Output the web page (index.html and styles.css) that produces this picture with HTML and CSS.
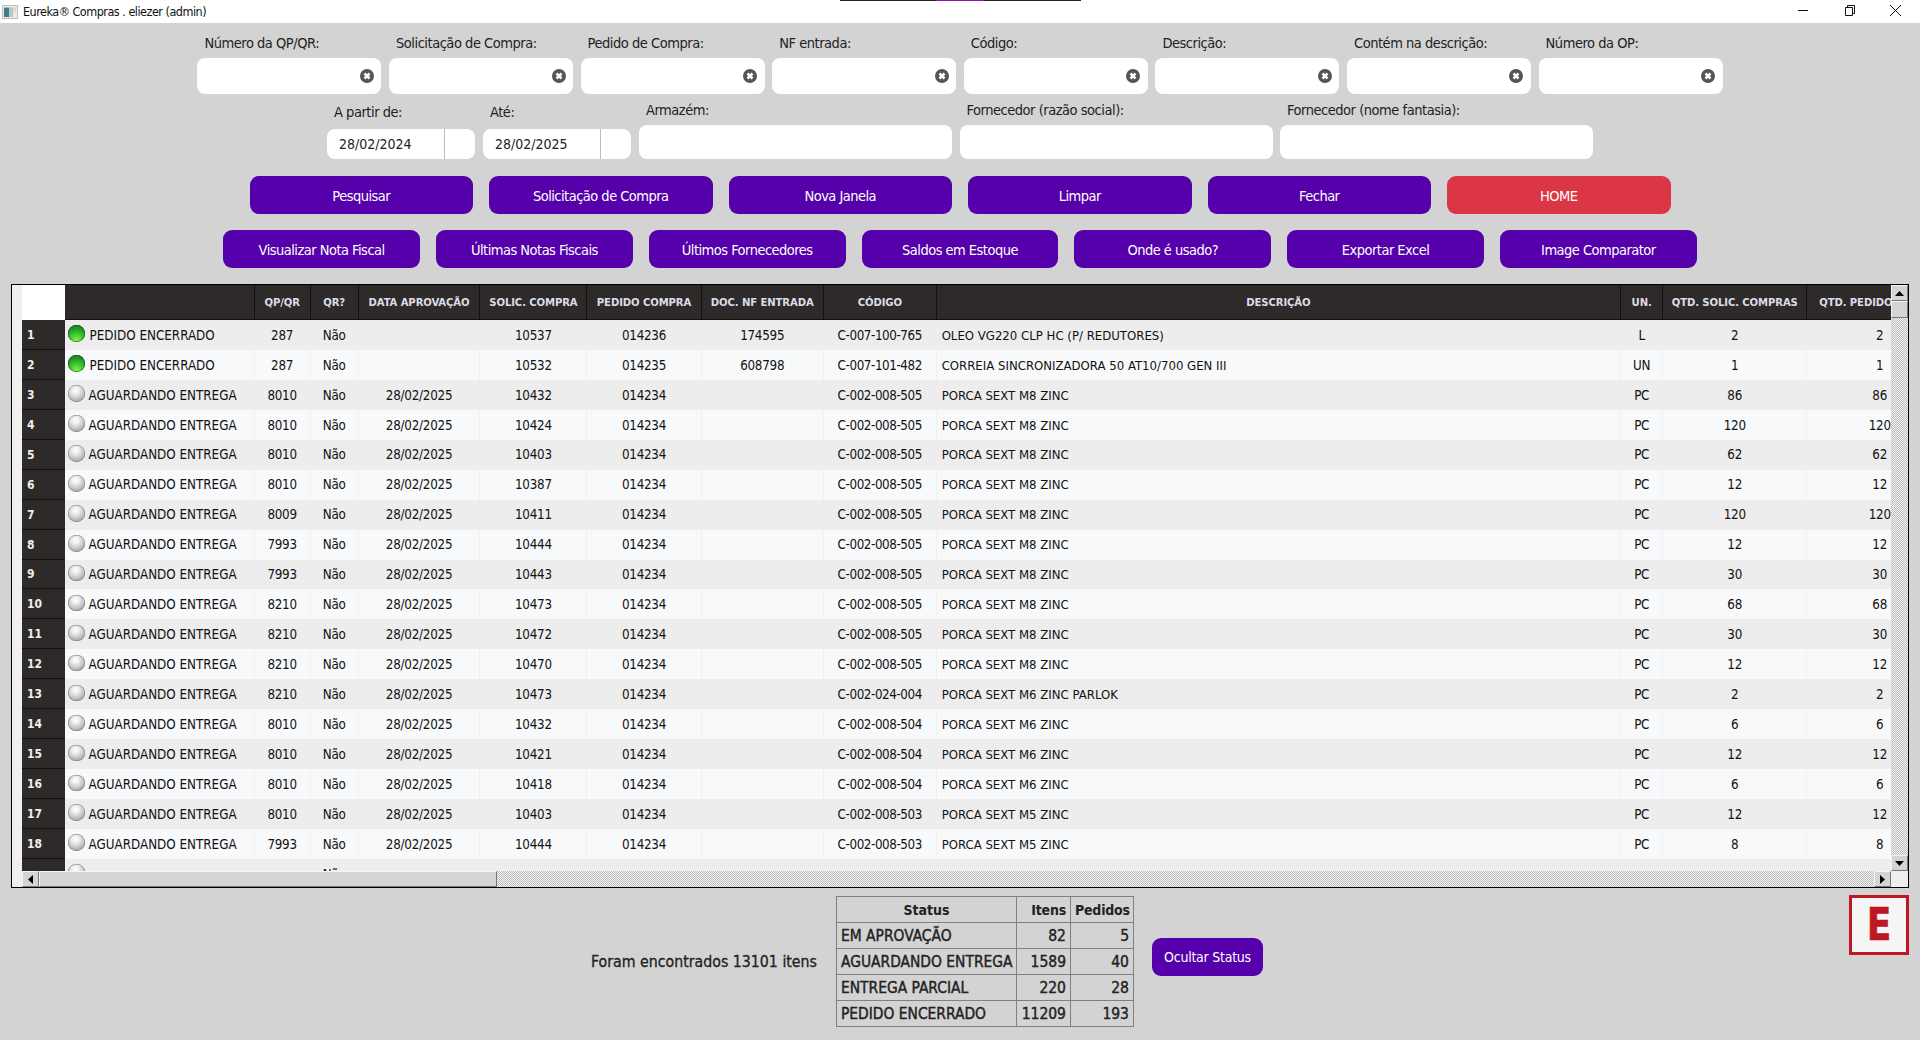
FILE: index.html
```html
<!DOCTYPE html>
<html lang="pt-BR">
<head>
<meta charset="utf-8">
<title>Eureka® Compras</title>
<link rel="stylesheet" href="styles.css">
</head>
<body>
<div class="topstrip"><span class="strip-a"></span><span class="strip-b"></span><span class="strip-a2"></span></div>
<header class="titlebar">
  <svg class="appicon" viewBox="0 0 16 16" aria-hidden="true"><rect x=".5" y="1.500" width="15" height="13" fill="#ececec" stroke="#bdbdbd"/><rect x="2" y="3.500" width="5" height="9.500" fill="#3d8088"/><rect x="7" y="3.500" width="4" height="9.500" fill="#b7c6cc"/><rect x="11" y="3.500" width="3" height="5" fill="#e4dcb4"/></svg>
  <span class="wintitle">Eureka® Compras . eliezer (admin)</span>
  <div class="winctrls">
    <svg viewBox="0 0 46 23" aria-hidden="true"><path d="M18 10.500h10" stroke="#111" fill="none"/></svg>
    <svg viewBox="0 0 46 23" aria-hidden="true"><path d="M19.500 7.500h7v8h-7zM21.500 7.500v-2h7v8h-2" stroke="#111" fill="none"/></svg>
    <svg viewBox="0 0 46 23" aria-hidden="true"><path d="M18 5l11 11M29 5L18 16" stroke="#111" fill="none"/></svg>
  </div>
</header>
<main class="app">
  <section class="row filters">
    <label class="field"><span>Número da QP/QR:</span><div class="input clearable"><i class="clear"><svg viewBox="0 0 14 14"><path d="M4.500 4.500l5 5M9.500 4.500l-5 5"/></svg></i></div></label>
    <label class="field"><span>Solicitação de Compra:</span><div class="input clearable"><i class="clear"><svg viewBox="0 0 14 14"><path d="M4.500 4.500l5 5M9.500 4.500l-5 5"/></svg></i></div></label>
    <label class="field"><span>Pedido de Compra:</span><div class="input clearable"><i class="clear"><svg viewBox="0 0 14 14"><path d="M4.500 4.500l5 5M9.500 4.500l-5 5"/></svg></i></div></label>
    <label class="field"><span>NF entrada:</span><div class="input clearable"><i class="clear"><svg viewBox="0 0 14 14"><path d="M4.500 4.500l5 5M9.500 4.500l-5 5"/></svg></i></div></label>
    <label class="field"><span>Código:</span><div class="input clearable"><i class="clear"><svg viewBox="0 0 14 14"><path d="M4.500 4.500l5 5M9.500 4.500l-5 5"/></svg></i></div></label>
    <label class="field"><span>Descrição:</span><div class="input clearable"><i class="clear"><svg viewBox="0 0 14 14"><path d="M4.500 4.500l5 5M9.500 4.500l-5 5"/></svg></i></div></label>
    <label class="field"><span>Contém na descrição:</span><div class="input clearable"><i class="clear"><svg viewBox="0 0 14 14"><path d="M4.500 4.500l5 5M9.500 4.500l-5 5"/></svg></i></div></label>
    <label class="field"><span>Número da OP:</span><div class="input clearable"><i class="clear"><svg viewBox="0 0 14 14"><path d="M4.500 4.500l5 5M9.500 4.500l-5 5"/></svg></i></div></label>
  </section>
  <section class="row filters2">
    <label class="field date"><span>A partir de:</span><div class="input dateinput"><b>28/02/2024</b><em></em></div></label>
    <label class="field date"><span>Até:</span><div class="input dateinput"><b>28/02/2025</b><em></em></div></label>
    <label class="field wide"><span>Armazém:</span><div class="input"></div></label>
    <label class="field wide"><span>Fornecedor (razão social):</span><div class="input"></div></label>
    <label class="field wide"><span>Fornecedor (nome fantasia):</span><div class="input"></div></label>
  </section>
  <section class="row buttons1">
    <button>Pesquisar</button><button>Solicitação de Compra</button><button>Nova Janela</button><button>Limpar</button><button>Fechar</button><button class="danger">HOME</button>
  </section>
  <section class="row buttons2">
    <button>Visualizar Nota Fiscal</button><button>Últimas Notas Fiscais</button><button>Últimos Fornecedores</button><button>Saldos em Estoque</button><button>Onde é usado?</button><button>Exportar Excel</button><button>Image Comparator</button>
  </section>
  <section class="grid-frame">
    <div class="grid-top">
      <div class="gutter"></div>
      <div class="viewport">
        <div class="tr th"><div class="corner"></div><div></div><div>QP/QR</div><div>QR?</div><div>DATA APROVAÇÃO</div><div>SOLIC. COMPRA</div><div>PEDIDO COMPRA</div><div>DOC. NF ENTRADA</div><div>CÓDIGO</div><div>DESCRIÇÃO</div><div>UN.</div><div>QTD. SOLIC. COMPRAS</div><div class="lastth">QTD. PEDIDO</div></div>
        <div class="tr"><div class="rh">1</div><div class="st ok"><i class="led green"></i>PEDIDO ENCERRADO</div><div>287</div><div>Não</div><div></div><div>10537</div><div>014236</div><div>174595</div><div class="cd">C-007-100-765</div><div class="ds">OLEO VG220 CLP HC (P/ REDUTORES)</div><div>L</div><div>2</div><div>2</div></div>
        <div class="tr"><div class="rh">2</div><div class="st ok"><i class="led green"></i>PEDIDO ENCERRADO</div><div>287</div><div>Não</div><div></div><div>10532</div><div>014235</div><div>608798</div><div class="cd">C-007-101-482</div><div class="ds">CORREIA SINCRONIZADORA 50 AT10/700 GEN III</div><div>UN</div><div>1</div><div>1</div></div>
        <div class="tr"><div class="rh">3</div><div class="st"><i class="led"></i>AGUARDANDO ENTREGA</div><div>8010</div><div>Não</div><div>28/02/2025</div><div>10432</div><div>014234</div><div></div><div class="cd">C-002-008-505</div><div class="ds">PORCA SEXT M8 ZINC</div><div>PC</div><div>86</div><div>86</div></div>
        <div class="tr"><div class="rh">4</div><div class="st"><i class="led"></i>AGUARDANDO ENTREGA</div><div>8010</div><div>Não</div><div>28/02/2025</div><div>10424</div><div>014234</div><div></div><div class="cd">C-002-008-505</div><div class="ds">PORCA SEXT M8 ZINC</div><div>PC</div><div>120</div><div>120</div></div>
        <div class="tr"><div class="rh">5</div><div class="st"><i class="led"></i>AGUARDANDO ENTREGA</div><div>8010</div><div>Não</div><div>28/02/2025</div><div>10403</div><div>014234</div><div></div><div class="cd">C-002-008-505</div><div class="ds">PORCA SEXT M8 ZINC</div><div>PC</div><div>62</div><div>62</div></div>
        <div class="tr"><div class="rh">6</div><div class="st"><i class="led"></i>AGUARDANDO ENTREGA</div><div>8010</div><div>Não</div><div>28/02/2025</div><div>10387</div><div>014234</div><div></div><div class="cd">C-002-008-505</div><div class="ds">PORCA SEXT M8 ZINC</div><div>PC</div><div>12</div><div>12</div></div>
        <div class="tr"><div class="rh">7</div><div class="st"><i class="led"></i>AGUARDANDO ENTREGA</div><div>8009</div><div>Não</div><div>28/02/2025</div><div>10411</div><div>014234</div><div></div><div class="cd">C-002-008-505</div><div class="ds">PORCA SEXT M8 ZINC</div><div>PC</div><div>120</div><div>120</div></div>
        <div class="tr"><div class="rh">8</div><div class="st"><i class="led"></i>AGUARDANDO ENTREGA</div><div>7993</div><div>Não</div><div>28/02/2025</div><div>10444</div><div>014234</div><div></div><div class="cd">C-002-008-505</div><div class="ds">PORCA SEXT M8 ZINC</div><div>PC</div><div>12</div><div>12</div></div>
        <div class="tr"><div class="rh">9</div><div class="st"><i class="led"></i>AGUARDANDO ENTREGA</div><div>7993</div><div>Não</div><div>28/02/2025</div><div>10443</div><div>014234</div><div></div><div class="cd">C-002-008-505</div><div class="ds">PORCA SEXT M8 ZINC</div><div>PC</div><div>30</div><div>30</div></div>
        <div class="tr"><div class="rh">10</div><div class="st"><i class="led"></i>AGUARDANDO ENTREGA</div><div>8210</div><div>Não</div><div>28/02/2025</div><div>10473</div><div>014234</div><div></div><div class="cd">C-002-008-505</div><div class="ds">PORCA SEXT M8 ZINC</div><div>PC</div><div>68</div><div>68</div></div>
        <div class="tr"><div class="rh">11</div><div class="st"><i class="led"></i>AGUARDANDO ENTREGA</div><div>8210</div><div>Não</div><div>28/02/2025</div><div>10472</div><div>014234</div><div></div><div class="cd">C-002-008-505</div><div class="ds">PORCA SEXT M8 ZINC</div><div>PC</div><div>30</div><div>30</div></div>
        <div class="tr"><div class="rh">12</div><div class="st"><i class="led"></i>AGUARDANDO ENTREGA</div><div>8210</div><div>Não</div><div>28/02/2025</div><div>10470</div><div>014234</div><div></div><div class="cd">C-002-008-505</div><div class="ds">PORCA SEXT M8 ZINC</div><div>PC</div><div>12</div><div>12</div></div>
        <div class="tr"><div class="rh">13</div><div class="st"><i class="led"></i>AGUARDANDO ENTREGA</div><div>8210</div><div>Não</div><div>28/02/2025</div><div>10473</div><div>014234</div><div></div><div class="cd">C-002-024-004</div><div class="ds">PORCA SEXT M6 ZINC PARLOK</div><div>PC</div><div>2</div><div>2</div></div>
        <div class="tr"><div class="rh">14</div><div class="st"><i class="led"></i>AGUARDANDO ENTREGA</div><div>8010</div><div>Não</div><div>28/02/2025</div><div>10432</div><div>014234</div><div></div><div class="cd">C-002-008-504</div><div class="ds">PORCA SEXT M6 ZINC</div><div>PC</div><div>6</div><div>6</div></div>
        <div class="tr"><div class="rh">15</div><div class="st"><i class="led"></i>AGUARDANDO ENTREGA</div><div>8010</div><div>Não</div><div>28/02/2025</div><div>10421</div><div>014234</div><div></div><div class="cd">C-002-008-504</div><div class="ds">PORCA SEXT M6 ZINC</div><div>PC</div><div>12</div><div>12</div></div>
        <div class="tr"><div class="rh">16</div><div class="st"><i class="led"></i>AGUARDANDO ENTREGA</div><div>8010</div><div>Não</div><div>28/02/2025</div><div>10418</div><div>014234</div><div></div><div class="cd">C-002-008-504</div><div class="ds">PORCA SEXT M6 ZINC</div><div>PC</div><div>6</div><div>6</div></div>
        <div class="tr"><div class="rh">17</div><div class="st"><i class="led"></i>AGUARDANDO ENTREGA</div><div>8010</div><div>Não</div><div>28/02/2025</div><div>10403</div><div>014234</div><div></div><div class="cd">C-002-008-503</div><div class="ds">PORCA SEXT M5 ZINC</div><div>PC</div><div>12</div><div>12</div></div>
        <div class="tr"><div class="rh">18</div><div class="st"><i class="led"></i>AGUARDANDO ENTREGA</div><div>7993</div><div>Não</div><div>28/02/2025</div><div>10444</div><div>014234</div><div></div><div class="cd">C-002-008-503</div><div class="ds">PORCA SEXT M5 ZINC</div><div>PC</div><div>8</div><div>8</div></div>
        <div class="tr"><div class="rh"></div><div class="st"><i class="led"></i></div><div></div><div>Não</div><div></div><div></div><div></div><div></div><div></div><div class="ds"></div><div></div><div></div><div></div></div>
      </div>
      <div class="vscroll">
        <div class="sbtn"><svg viewBox="0 0 9 5"><path d="M0 5h9L4.500 0z"/></svg></div>
        <div class="vthumb"></div>
        <div class="track"></div>
        <div class="sbtn"><svg viewBox="0 0 9 5"><path d="M0 0h9L4.500 5z"/></svg></div>
      </div>
    </div>
    <div class="grid-bottom">
      <div class="gutter"></div>
      <div class="sbtn"><svg class="sh" viewBox="0 0 5 9"><path d="M5 0v9L0 4.500z"/></svg></div>
      <div class="hthumb"></div>
      <div class="track"></div>
      <div class="sbtn"><svg class="sh" viewBox="0 0 5 9"><path d="M0 0v9l5-4.500z"/></svg></div>
      <div class="scorner"></div>
    </div>
  </section>
  <section class="footer">
    <p class="found">Foram encontrados 13101 itens</p>
    <table class="status">
      <tr><th>Status</th><th class="n">Itens</th><th class="n">Pedidos</th></tr>
      <tr><td>EM APROVAÇÃO</td><td class="n">82</td><td class="n">5</td></tr>
      <tr><td>AGUARDANDO ENTREGA</td><td class="n">1589</td><td class="n">40</td></tr>
      <tr><td>ENTREGA PARCIAL</td><td class="n">220</td><td class="n">28</td></tr>
      <tr><td>PEDIDO ENCERRADO</td><td class="n">11209</td><td class="n">193</td></tr>
    </table>
    <button class="toggle">Ocultar Status</button>
    <div class="logo"><span>E</span></div>
  </section>
</main>
</body>
</html>
```

FILE: styles.css
```css
* { box-sizing: border-box; }
html, body { margin: 0; height: 100%; }
body {
  width: 1920px; height: 1040px; overflow: hidden; position: relative;
  background: #d3d3d3; color: #222;
  font-family: "DejaVu Sans", "Liberation Sans", sans-serif; font-stretch: condensed;
}
.topstrip { position: absolute; left: 840px; top: 0; display: flex; height: 1px; z-index: 2; }
.strip-a { width: 96px; background: #222; }
.strip-b { width: 48px; background: #8a1aa8; }
.strip-a2 { width: 97px; background: #222; }

.titlebar { height: 23px; background: #fff; display: flex; align-items: center; color: #111; }
.appicon { width: 16px; height: 16px; margin-left: 2px; }
.wintitle { margin-left: 5px; font-size: 12.500px; letter-spacing: -.5px; }
.winctrls { margin-left: auto; margin-right: 2px; display: flex; height: 23px; }
.winctrls svg { width: 46px; height: 23px; }

.row { display: flex; justify-content: center; }
.filters { gap: 7.600px; padding-top: 10px; }
.filters2 { gap: 8px; margin-top: 6px; align-items: flex-end; }
.field { display: flex; flex-direction: column; }
.field > span { height: 20px; line-height: 20px; font-size: 14.500px; letter-spacing: -.47px; padding-left: 7px; white-space: nowrap; }
.input { background: #fff; border-radius: 8px; position: relative; display: flex; align-items: center; }
.filters .field { width: 184px; }
.filters .input { height: 36px; margin-top: 5px; }
.clear { position: absolute; right: 7.500px; top: 11px; width: 14px; height: 14px; background: #555; border-radius: 50%; display: block; }
.clear svg { display: block; width: 14px; height: 14px; stroke: #fff; stroke-width: 2.500; fill: none; }
.date { width: 148px; }
.date .input { height: 30px; margin-top: 7px; }
.dateinput b { font-weight: 400; font-size: 14px; padding-left: 12px; width: 117.500px; height: 100%; line-height: 30px; border-right: 1px solid #bdbdbd; color: #222; }
.wide { width: 313px; }
.wide + .wide { margin-left: -.5px; }
.wide .input { height: 34px; margin-top: 5px; }

button {
  border: 0; font: inherit; font-stretch: condensed; font-size: 14.500px; letter-spacing: -.52px; color: #fff; background: #5500aa;
  border-radius: 9px; height: 38px; padding: 1px 0 0; display: block;
}
.buttons1 { gap: 16px; margin-top: 17px; }
.buttons1 button { width: 223.500px; }
.buttons2 { gap: 16px; margin-top: 16px; }
.buttons2 button { width: 196.800px; }
.danger { background: #dc3545; }

.grid-frame { margin: 16px 11px 0; height: 604px; border: 1px solid #000; display: flex; flex-direction: column; background: #eee; }
.grid-top { display: flex; height: 586px; }
.gutter { width: 10px; flex: none; background: #f0f0f0; }
.viewport { width: 1869px; flex: none; overflow: hidden; }
.tr {
  display: grid; width: 1931px; height: 29.940px; font-size: 13.300px; color: #111;
  grid-template-columns: 43px 189.700px 55.900px 48.200px 121.600px 107.100px 114.100px 122.400px 112.700px 684.500px 42.100px 144px 146px;
  background: #ededed;
}
.tr:nth-child(odd) { background: #f8f9fb; }
.tr > div { display: flex; align-items: center; justify-content: center; border-right: 1px solid #f0f0f0; white-space: nowrap; overflow: hidden; letter-spacing: -.25px; padding-top: .5px; }
.tr:nth-child(even) > div { border-right-color: #ededed; }
.tr > .st { justify-content: flex-start; padding-left: 3px; letter-spacing: 0; }
.tr > .ds { justify-content: flex-start; padding-left: 5px; letter-spacing: 0; font-size: 13.050px; }
.tr > .cd { letter-spacing: -.42px; }
.tr > .rh { justify-content: flex-start; padding: 1px 0 0 5px; background: #2e2a29; color: #eee; font-weight: 700; font-size: 12px; border-right: 0; border-bottom: 1px solid #111; font-family: "DejaVu Sans", sans-serif; letter-spacing: 0; }
.led { width: 16.500px; height: 16.500px; border-radius: 50%; flex: none; margin: -3px 4px 0 0; background: radial-gradient(circle at 45% 32%, #fff 0, #f0f0f0 22%, #c0c0c0 58%, #8c8c8c 88%, #777 100%); box-shadow: inset 0 0 0 .5px #808080; }
.led.green { background: radial-gradient(circle at 50% 88%, #8fe84a 0, #3fcb2c 35%, #1f9c28 65%, #147a20 90%, #0b5a14 100%); box-shadow: inset 0 0 0 .6px #0a4d12; }
.ok .led { margin-right: 5px; }
.tr.th { height: 35px; background: #2e2a29; color: #dcdce8; font-weight: 700; font-size: 11.200px; font-family: "DejaVu Sans", sans-serif; }
.tr.th > div { border-right: 1px solid #111; border-bottom: 1px solid #111; padding-top: 1px; letter-spacing: -.1px; }
.tr.th > .corner { background: #fff; border: 0; }
.tr.th > .lastth { justify-content: flex-start; padding-left: 12px; border: 0; border-bottom: 1px solid #111; }

.track { background: repeating-conic-gradient(#f4f4f4 0 25%, #bcbcbc 0 50%) 0 0 / 2px 2px; flex: 1; }
.sbtn { width: 17px; height: 16px; flex: none; background: #d4d4d4; border: 1px solid; border-color: #f4f4f4 #777 #777 #f4f4f4; display: flex; align-items: center; justify-content: center; }
.sbtn svg { width: 9px; height: 5px; fill: #000; display: block; }
.sbtn svg.sh { width: 5px; height: 9px; }
.vscroll { width: 17px; flex: none; display: flex; flex-direction: column; }
.vthumb { height: 17px; background: #d4d4d4; border: 1px solid; border-color: #f4f4f4 #777 #777 #f4f4f4; flex: none; }
.grid-bottom { display: flex; height: 16px; }
.grid-bottom .gutter { background: #f0f0f0; }
.hthumb { width: 458px; flex: none; background: #d4d4d4; border: 1px solid; border-color: #f4f4f4 #777 #777 #f4f4f4; }
.scorner { width: 17px; flex: none; background: #eee; }

.footer { display: flex; padding: 8px 11px 0 0; align-items: flex-start; }
.found { margin: 56px 20px 0 591px; width: 225px; font-size: 15.750px; line-height: 20px; white-space: nowrap; -webkit-text-stroke: .3px #222; }
.status { border-collapse: collapse; width: 298px; height: 131px; font-size: 15.400px; -webkit-text-stroke: .4px #222; table-layout: fixed; }
.status th, .status td { border: 1px solid #808080; padding: 0 4px; height: 26px; font-weight: 400; white-space: nowrap; }
.status th { font-weight: 700; font-size: 14px; -webkit-text-stroke: 0; }
.status .n { font-size: 15.500px; }
.status th.n { font-size: 14px; letter-spacing: -.2px; }
.status tr > :first-child { width: 180px; text-align: left; }
.status th:first-child { text-align: center; }
.status tr > :nth-child(2) { width: 54px; }
.status .n { text-align: right; }
.toggle { width: 111px; margin: 42px 0 0 18px; padding: 0 0 1px; font-size: 14px; letter-spacing: -.25px; }
.logo { width: 60px; height: 60px; margin: -1px 0 0 auto; border: 3px solid #be1622; background: #f5f5f5; display: flex; align-items: center; justify-content: center; }
.logo span { font-family: "DejaVu Sans", sans-serif; font-stretch: normal; font-weight: 700; font-size: 44px; line-height: 1; color: #be1622; transform: scaleX(.82); -webkit-text-stroke: .6px #be1622; }
```
